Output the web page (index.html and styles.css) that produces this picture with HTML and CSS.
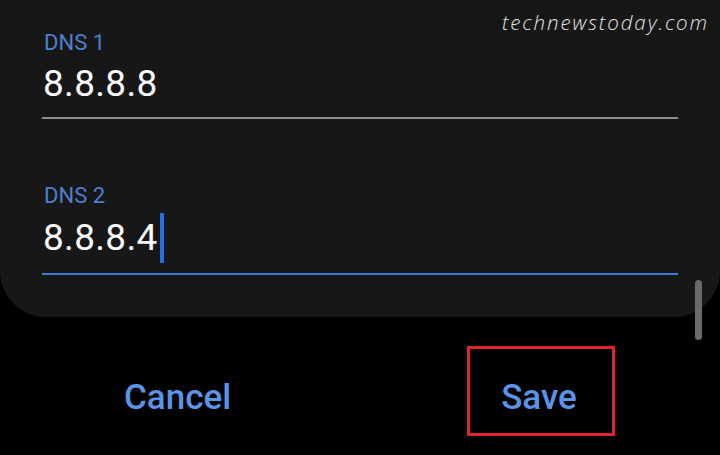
FILE: index.html
```html
<!DOCTYPE html>
<html>
<head>
<meta charset="utf-8">
<link rel="stylesheet" href="styles.css">
</head>
<body>
<div class="screen">
  <div class="panel">
    <div class="watermark">technewstoday.com</div>
    <div class="field">
      <div class="label">DNS 1</div>
      <div class="value">8.8.8.8</div>
      <div class="line"></div>
    </div>
    <div class="field second">
      <div class="label">DNS 2</div>
      <div class="value">8.8.8.4<span class="caret"></span></div>
      <div class="line active"></div>
    </div>
  </div>
  <div class="scrollbar"></div>
  <div class="actions">
    <div class="btn cancel">Cancel</div>
    <div class="btn save">Save<span class="highlight"></span></div>
  </div>
</div>
</body>
</html>
```
FILE: styles.css
```css
html, body {
  margin: 0;
  padding: 0;
  background: #000;
}
.screen {
  position: relative;
  width: 720px;
  height: 455px;
  overflow: hidden;
  background: #000;
  font-family: Roboto, "Liberation Sans", sans-serif;
}
.panel {
  position: relative;
  height: 317px;
  background: #171717;
  border-radius: 0 0 46px 46px;
  padding: 29px 42px 0 42px;
  box-sizing: border-box;
}
.watermark {
  position: absolute;
  top: 8px;
  right: 11px;
  font-family: "Open Sans", sans-serif;
  font-style: italic;
  font-weight: 300;
  font-size: 20.5px;
  letter-spacing: 1.9px;
  color: #e2e2e2;
}
.field {
  display: flex;
  flex-direction: column;
}
.field.second {
  margin-top: 63px;
}
.label {
  font-size: 22px;
  color: #4b7fd0;
  padding-left: 2px;
  line-height: 28px;
}
.value {
  display: flex;
  align-items: center;
  font-size: 37px;
  color: #fafafa;
  padding-left: 1px;
  line-height: 46px;
  margin-top: 4px;
  letter-spacing: 0.3px;
}
.caret {
  display: inline-block;
  width: 4px;
  height: 50px;
  background: #2272e6;
  margin-left: 2px;
  border-radius: 1px;
}
.line {
  height: 2px;
  background: #8e8e8e;
  margin-top: 10px;
}
.field.second .value {
  margin-top: 3px;
}
.field.second .line {
  margin-top: 10px;
}
.line.active {
  background: #3d79d6;
}
.scrollbar {
  position: absolute;
  left: 695px;
  top: 280px;
  width: 7px;
  height: 60px;
  border-radius: 4px;
  background: #6a6a6a;
}
.actions {
  display: flex;
  height: 138px;
  padding-top: 22px;
  box-sizing: border-box;
  align-items: center;
}
.btn {
  position: relative;
  font-size: 35px;
  font-weight: 500;
  color: #5b93e6;
}
.cancel {
  margin-left: 124px;
}
.save {
  margin-left: 270px;
}
.highlight {
  position: absolute;
  left: -34px;
  right: -38px;
  top: -31px;
  bottom: -18px;
  border: 3px solid #e0232c;
}
```
